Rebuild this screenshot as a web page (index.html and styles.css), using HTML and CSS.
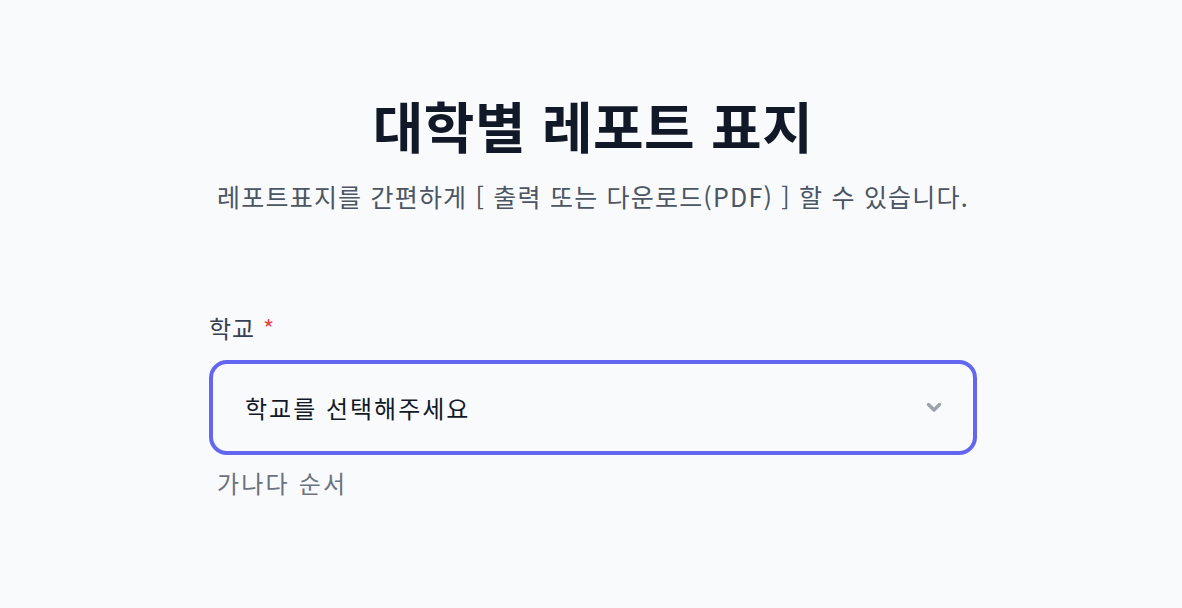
FILE: index.html
```html
<!DOCTYPE html>
<html lang="ko">
<head>
<meta charset="utf-8">
<link rel="stylesheet" href="styles.css">
</head>
<body>
<main class="page">
  <header class="head">
    <h1 class="title">대학별 레포트 표지</h1>
    <p class="subtitle">레포트표지를 간편하게 [ 출력 또는 다운로드(PDF) ] 할 수 있습니다.</p>
  </header>
  <section class="form">
    <label class="label">학교 <span class="req">*</span></label>
    <div class="select">
      <span class="select-text">학교를 선택해주세요</span>
      <svg class="chev" width="16" height="11" viewBox="0 0 16 11"><path d="M2.5 2.5 L8 8 L13.5 2.5" fill="none" stroke="#9ca3af" stroke-width="3.5" stroke-linecap="round" stroke-linejoin="round"/></svg>
    </div>
    <p class="hint">가나다 순서</p>
  </section>
</main>
</body>
</html>
```
FILE: styles.css
```css
* { box-sizing: border-box; }
html, body { margin: 0; padding: 0; }
body {
  background: #f9fafb;
  font-family: "Noto Sans CJK KR", "Noto Sans", sans-serif;
  color: #111827;
  width: 1182px;
  height: 608px;
  overflow: hidden;
  padding-left: 4px;
}
.page {
  width: 768px;
  margin: 0 auto;
  padding-top: 86px;
}
.head { text-align: center; }
.title {
  margin: 0;
  font-size: 55px;
  font-weight: 700;
  line-height: 77px;
  letter-spacing: 0.5px;
  color: #111827;
}
.subtitle {
  margin: 17px 0 0;
  font-size: 25px;
  line-height: 32px;
  letter-spacing: 1.2px;
  color: #4b5563;
}
.form { margin-top: 100px; }
.label {
  display: block;
  font-size: 24px;
  line-height: 32px;
  letter-spacing: 1px;
  color: #374151;
}
.req { color: #ef4444; }
.select {
  margin-top: 16px;
  height: 95px;
  border: 4px solid #6366f1;
  border-radius: 18px;
  display: flex;
  align-items: center;
  justify-content: space-between;
  padding: 0 31px 0 32px;
}
.select-text {
  font-size: 24px;
  letter-spacing: 2px;
  color: #111827;
}
.chev { display: block; }
.hint {
  margin: 12px 0 0 8px;
  font-size: 24px;
  line-height: 32px;
  letter-spacing: 2.2px;
  color: #6b7280;
}
```
